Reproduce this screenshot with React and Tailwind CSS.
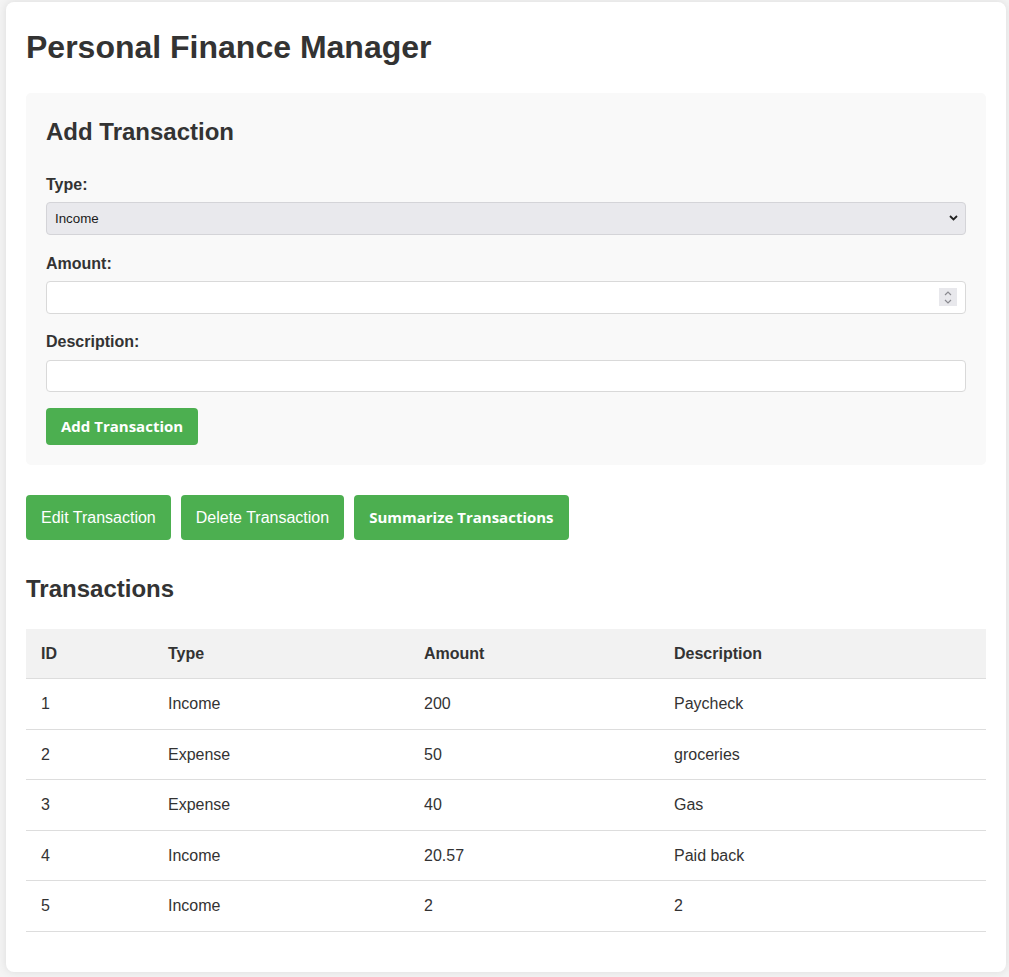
import React from "react";

const rows = [
  { id: 1, type: "Income", amount: "200", desc: "Paycheck" },
  { id: 2, type: "Expense", amount: "50", desc: "groceries" },
  { id: 3, type: "Expense", amount: "40", desc: "Gas" },
  { id: 4, type: "Income", amount: "20.57", desc: "Paid back" },
  { id: 5, type: "Income", amount: "2", desc: "2" },
];

export default function App() {
  return (
    <div
      className="min-h-screen bg-[#f4f4f4] pl-[6px] pt-[2px] pb-[5px] text-[#333] leading-[1.6]"
      style={{ fontFamily: '"Liberation Sans", Arial, sans-serif' }}
    >
      <div className="w-[1000px] bg-white rounded-lg shadow-[0_0_10px_rgba(0,0,0,0.1)] p-5">
        <h1 className="text-[32px] font-bold leading-[1.6] mb-5">Personal Finance Manager</h1>

        <div className="bg-[#f9f9f9] rounded-[5px] p-5">
          <h2 className="text-2xl font-bold leading-[1.6] mb-5">Add Transaction</h2>

          <label className="block font-bold mb-[5px]">Type:</label>
          <div className="relative mb-4">
            <select className="block appearance-none w-full h-[32.4px] bg-[#e9e9ed] border border-[#d4d4d8] rounded-[4px] pl-[8px] text-[13.33px] text-[#1a1a1a] outline-none">
              <option>Income</option>
              <option>Expense</option>
            </select>
            <svg className="absolute right-[8px] top-[13px] pointer-events-none" width="9" height="6" viewBox="0 0 9 6">
              <path d="M1 1 L4.5 4.5 L8 1" fill="none" stroke="#222" strokeWidth="1.8" />
            </svg>
          </div>

          <label className="block font-bold mb-[5px]">Amount:</label>
          <div className="relative mb-[15.5px]">
            <input type="text" className="block w-full h-[32.4px] bg-white border border-[#d9d9d9] rounded-[4px] px-[8px] text-[13.33px] outline-none" />
            <div className="absolute right-[9px] top-[7px] w-[18px] h-[18px] bg-[#e8e8ec] flex flex-col items-center justify-center gap-[3px]">
              <svg width="8" height="5" viewBox="0 0 8 5">
                <path d="M1 4 L4 1 L7 4" fill="none" stroke="#8a8a90" strokeWidth="1.2" />
              </svg>
              <svg width="8" height="5" viewBox="0 0 8 5">
                <path d="M1 1 L4 4 L7 1" fill="none" stroke="#8a8a90" strokeWidth="1.2" />
              </svg>
            </div>
          </div>

          <label className="block font-bold mb-[5px]">Description:</label>
          <input type="text" className="block w-full h-[32.4px] bg-white border border-[#d9d9d9] rounded-[4px] px-[8px] text-[13.33px] outline-none mb-[15.5px]" />

          <button
            className="block h-[37px] px-[15px] bg-[#4caf50] text-white rounded-[4px] font-bold text-[15px]"
            style={{ fontFamily: '"Open Sans", sans-serif' }}
          >
            Add Transaction
          </button>
        </div>

        <div className="flex gap-[10px] mt-[30px]">
          <button className="py-[10px] px-[15px] bg-[#4caf50] text-white rounded-[4px] text-base leading-[1.6]">Edit Transaction</button>
          <button className="py-[10px] px-[15px] bg-[#4caf50] text-white rounded-[4px] text-base leading-[1.6]">Delete Transaction</button>
          <button
            className="py-[10px] px-[15px] bg-[#4caf50] text-white rounded-[4px] font-bold text-[15px] leading-[25.6px]"
            style={{ fontFamily: '"Open Sans", sans-serif' }}
          >
            Summarize Transactions
          </button>
        </div>

        <h2 className="text-2xl font-bold leading-[1.6] mt-[30px] mb-5">Transactions</h2>

        <table className="w-full table-fixed border-collapse mb-5 text-left">
          <thead>
            <tr className="bg-[#f2f2f2] border-b border-[#ddd]">
              <th className="w-[127px] py-[12px] px-[15px] font-bold">ID</th>
              <th className="w-[256px] py-[12px] px-[15px] font-bold">Type</th>
              <th className="w-[250px] py-[12px] px-[15px] font-bold">Amount</th>
              <th className="py-[12px] px-[15px] font-bold">Description</th>
            </tr>
          </thead>
          <tbody>
            {rows.map((r) => (
              <tr key={r.id} className="border-b border-[#ddd]">
                <td className="py-[12px] px-[15px]">{r.id}</td>
                <td className="py-[12px] px-[15px]">{r.type}</td>
                <td className="py-[12px] px-[15px]">{r.amount}</td>
                <td className="py-[12px] px-[15px]">{r.desc}</td>
              </tr>
            ))}
          </tbody>
        </table>
      </div>
    </div>
  );
}
